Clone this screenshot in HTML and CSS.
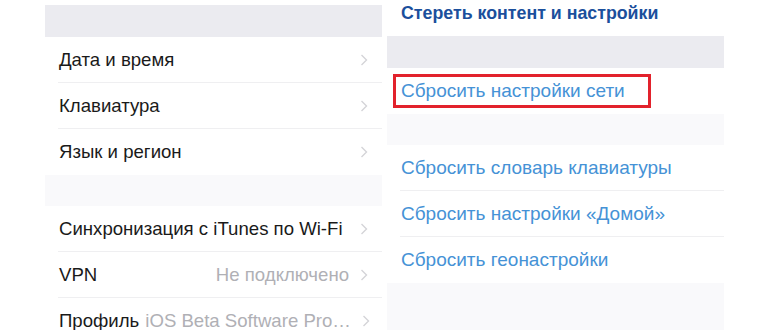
FILE: index.html
```html
<!DOCTYPE html>
<html lang="ru">
<head>
<meta charset="UTF-8" />
<meta name="viewport" content="width=device-width, initial-scale=1" />
<title>Настройки</title>
<link rel="stylesheet" href="styles.css">
</head>
<body>

<div class="screens">
  <section class="panel panel-left">
    <div class="band band-top"></div>
    <div class="group">
      <div class="row">
        <span class="label">Дата и время</span>
        <svg class="chevron" viewBox="0 0 8 12"><polyline points="1.5,1 6.5,6 1.5,11" /></svg>
      </div>
      <div class="row">
        <span class="label">Клавиатура</span>
        <svg class="chevron" viewBox="0 0 8 12"><polyline points="1.5,1 6.5,6 1.5,11" /></svg>
      </div>
      <div class="row">
        <span class="label">Язык и регион</span>
        <svg class="chevron" viewBox="0 0 8 12"><polyline points="1.5,1 6.5,6 1.5,11" /></svg>
      </div>
    </div>
    <div class="band band-faint"></div>
    <div class="group">
      <div class="row">
        <span class="label">Синхронизация с iTunes по Wi-Fi</span>
        <svg class="chevron" viewBox="0 0 8 12"><polyline points="1.5,1 6.5,6 1.5,11" /></svg>
      </div>
      <div class="row">
        <span class="label">VPN</span>
        <span class="value">Не подключено</span>
        <svg class="chevron" viewBox="0 0 8 12"><polyline points="1.5,1 6.5,6 1.5,11" /></svg>
      </div>
      <div class="row">
        <span class="label">Профиль</span>
        <span class="value">iOS Beta Software Pro…</span>
        <svg class="chevron" viewBox="0 0 8 12"><polyline points="1.5,1 6.5,6 1.5,11" /></svg>
      </div>
    </div>
  </section>

  <section class="panel panel-right">
    <div class="group">
      <div class="row">
        <span class="action action-dark">Стереть контент и настройки</span>
      </div>
    </div>
    <div class="band band-top"></div>
    <div class="group">
      <div class="row">
        <span class="action highlighted">Сбросить настройки сети</span>
      </div>
    </div>
    <div class="band band-faint"></div>
    <div class="group">
      <div class="row">
        <span class="action">Сбросить словарь клавиатуры</span>
      </div>
      <div class="row">
        <span class="action">Сбросить настройки «Домой»</span>
      </div>
      <div class="row">
        <span class="action">Сбросить геонастройки</span>
      </div>
    </div>
    <div class="band band-faint band-fill"></div>
  </section>
</div>

</body>
</html>
```

FILE: styles.css
```css
body {
  margin: 0;
  background: #fff;
  font-family: "Liberation Sans", Arial, sans-serif;
  overflow: hidden;
}
.screens {
  display: flex;
  gap: 5px;
  padding-left: 45px;
  height: 330px;
}
.panel {
  width: 337px;
  display: flex;
  flex-direction: column;
}
.panel-left {
  padding-top: 5px;
}
.panel-right {
  margin-top: -10px;
}
.band {
  height: 32px;
  flex-shrink: 0;
}
.band-top {
  background: #ebebf0;
}
.band-faint {
  background: #f9f9fb;
  height: 31px;
}
.band-fill {
  flex-grow: 1;
}
.group {
  background: #fff;
  flex-shrink: 0;
}
.row {
  height: 46px;
  display: flex;
  align-items: center;
  margin-left: 13px;
  padding-left: 1px;
  padding-right: 14px;
  border-bottom: 1px solid #efeff1;
  box-sizing: border-box;
}
.row:last-child {
  border-bottom: none;
}
.label {
  font-size: 18.6px;
  color: #1a1a1a;
  white-space: nowrap;
}
.value {
  font-size: 18.6px;
  color: #b0b0b5;
  margin-left: auto;
  padding-left: 6px;
  white-space: nowrap;
}
.chevron {
  width: 8px;
  height: 12px;
  margin-left: auto;
  flex-shrink: 0;
}
.value + .chevron {
  margin-left: 11px;
}
.chevron polyline {
  fill: none;
  stroke: #d4d4d8;
  stroke-width: 1.4;
}
.action {
  font-size: 19px;
  color: #4592d6;
  white-space: nowrap;
}
.action-dark {
  color: #1b4f9c;
  font-weight: bold;
  font-size: 17.8px;
}
.highlighted {
  outline: 3px solid #e2222c;
  padding: 3px 23px 3px 5px;
  margin-left: -5px;
}
```
